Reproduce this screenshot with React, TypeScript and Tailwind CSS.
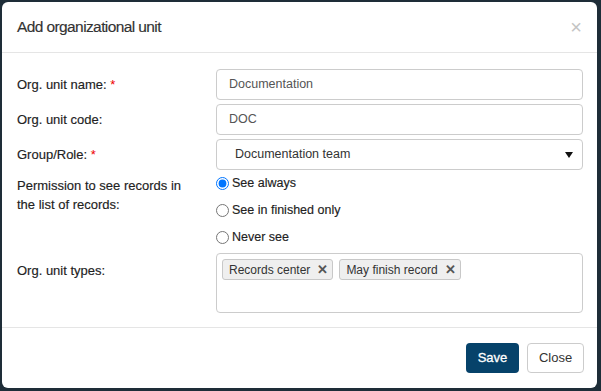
import React from "react";

const font = { fontFamily: '"Liberation Sans", Arial, sans-serif' };

function Tag({ label }: { label: string }) {
  return (
    <span className="flex items-center h-[21px] pl-[6px] pr-[4px] mr-[6px] bg-[#efefef] border border-[#c8c8c8] rounded-[3px] text-[12px] text-[#333]">
      {label}
      <span className="ml-[7px] text-[13px] font-bold text-[#555] leading-none">✕</span>
    </span>
  );
}

function Radio({ label, checked }: { label: string; checked?: boolean }) {
  return (
    <label className="flex items-center h-[27px] text-[12.5px] text-[#222] [-webkit-text-stroke:0.15px_#222]">
      <input type="radio" name="perm" defaultChecked={checked} className="w-[13px] h-[13px] mr-[3px] accent-[#0075ff]" />
      {label}
    </label>
  );
}

export default function App() {
  return (
    <div className="w-[601px] h-[391px] bg-[#1e2d38] pt-[2px] pl-[2px]" style={font}>
      <div className="w-[595px] h-[386px] bg-white rounded-[6px] flex flex-col">
        {/* header */}
        <div className="h-[51px] flex items-center justify-between pl-[15px] pr-[15px] border-b border-[#e5e5e5]">
          <h2 className="text-[15.5px] text-[#333] tracking-[-0.6px] [-webkit-text-stroke:0.15px_#333]">
            Add organizational unit
          </h2>
          <span className="text-[20px] leading-none text-[#c4c4c4]">×</span>
        </div>

        {/* body */}
        <div className="flex-1 pt-[16px] pl-[15px] pr-[14px] border-b border-[#e5e5e5] text-[13px] text-[#222] [&_.lbl]:[-webkit-text-stroke:0.15px_#222]">
          <div className="flex h-[31px] items-center">
            <div className="lbl w-[199px]">
              Org. unit name: <span className="text-[#e00] [-webkit-text-stroke:0]">*</span>
            </div>
            <div className="flex-1 h-full border border-[#ccc] rounded-[4px] flex items-center pl-[12px] text-[12.5px] text-[#555]">
              Documentation
            </div>
          </div>
          <div className="flex h-[31px] items-center mt-[4px]">
            <div className="lbl w-[199px]">Org. unit code:</div>
            <div className="flex-1 h-full border border-[#ccc] rounded-[4px] flex items-center pl-[12px] text-[12.5px] text-[#555]">
              DOC
            </div>
          </div>
          <div className="flex h-[31px] items-center mt-[4px]">
            <div className="lbl w-[199px]">
              Group/Role: <span className="text-[#e00] [-webkit-text-stroke:0]">*</span>
            </div>
            <div className="flex-1 h-full border border-[#ccc] rounded-[4px] flex items-center justify-between pl-[18px] pr-[9px] text-[12.5px] text-[#333]">
              Documentation team
              <svg width="8" height="6" viewBox="0 0 8 6">
                <path d="M0 0 H8 L4 6 Z" fill="#111" />
              </svg>
            </div>
          </div>
          <div className="flex">
            <div className="lbl w-[199px] pt-[6px] leading-[19px]">
              Permission to see records in
              <br />
              the list of records:
            </div>
            <div className="flex flex-col">
              <Radio label="See always" checked />
              <Radio label="See in finished only" />
              <Radio label="Never see" />
            </div>
          </div>
          <div className="flex mt-[2px]">
            <div className="lbl w-[199px] pt-[8px]">Org. unit types:</div>
            <div className="flex-1 h-[60px] border border-[#ccc] rounded-[4px] pt-[5px] pl-[5px] flex items-start">
              <Tag label="Records center" />
              <Tag label="May finish record" />
            </div>
          </div>
        </div>

        {/* footer */}
        <div className="h-[60px] flex items-center justify-end gap-[8px] pr-[13px]">
          <button className="w-[53px] h-[30px] bg-[#06426a] text-white text-[13px] rounded-[4px] [-webkit-text-stroke:0.3px_#fff]">
            Save
          </button>
          <button className="w-[57px] h-[30px] bg-white border border-[#ccc] text-[#333] text-[13px] rounded-[4px]">
            Close
          </button>
        </div>
      </div>
    </div>
  );
}
